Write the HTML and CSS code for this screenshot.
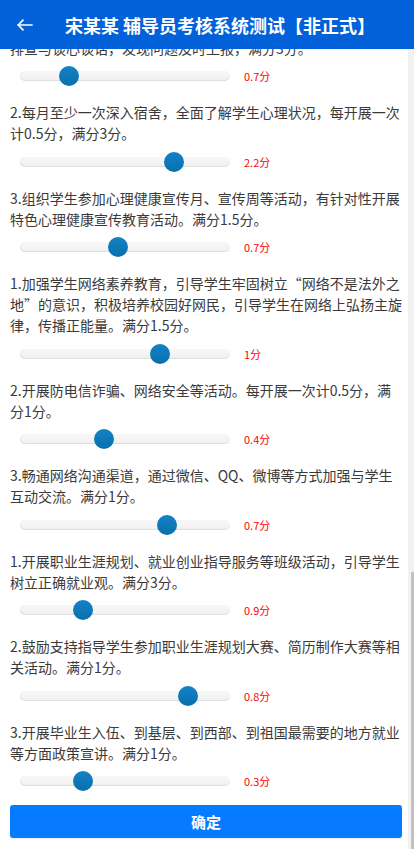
FILE: index.html
```html
<!DOCTYPE html>
<html lang="zh-CN">
<head>
<meta charset="utf-8">
<meta name="viewport" content="width=device-width, initial-scale=1">
<title>辅导员考核系统测试</title>
<link rel="stylesheet" href="styles.css">
</head>
<body>
<div class="app">
  <header class="topbar">
    <span class="back" aria-label="返回">
      <svg width="16" height="12" viewBox="0 0 16 12" fill="none" stroke="#fff" stroke-width="1.7" stroke-linecap="round" stroke-linejoin="round"><path d="M1.2 6H15"/><path d="M6 1.2L1.2 6L6 10.8"/></svg>
    </span>
    <h1 class="title">宋某某 辅导员考核系统测试【非正式】</h1>
  </header>
  <div class="viewport">
    <main class="scroll">
      <div class="list">
        <div class="item"><p class="desc">1.建立健全学生心理健康档案，对心理问题学生进行重点关注，及时做好心理疏导和危机干预工作，定期深入学生宿舍开展心理排查与谈心谈话，发现问题及时上报，满分3分。</p><div class="slider-row"><div class="track"><span class="thumb" style="left:23.33%"></span></div><span class="val">0.7分</span></div></div>
        <div class="item"><p class="desc">2.每月至少一次深入宿舍，全面了解学生心理状况，每开展一次计0.5分，满分3分。</p><div class="slider-row"><div class="track"><span class="thumb" style="left:73.33%"></span></div><span class="val">2.2分</span></div></div>
        <div class="item"><p class="desc">3.组织学生参加心理健康宣传月、宣传周等活动，有针对性开展特色心理健康宣传教育活动。满分1.5分。</p><div class="slider-row"><div class="track"><span class="thumb" style="left:46.67%"></span></div><span class="val">0.7分</span></div></div>
        <div class="item"><p class="desc">1.加强学生网络素养教育，引导学生牢固树立“网络不是法外之地”的意识，积极培养校园好网民，引导学生在网络上弘扬主旋律，传播正能量。满分1.5分。</p><div class="slider-row"><div class="track"><span class="thumb" style="left:66.67%"></span></div><span class="val">1分</span></div></div>
        <div class="item"><p class="desc">2.开展防电信诈骗、网络安全等活动。每开展一次计0.5分，满分1分。</p><div class="slider-row"><div class="track"><span class="thumb" style="left:40%"></span></div><span class="val">0.4分</span></div></div>
        <div class="item"><p class="desc">3.畅通网络沟通渠道，通过微信、QQ、微博等方式加强与学生互动交流。满分1分。</p><div class="slider-row"><div class="track"><span class="thumb" style="left:70%"></span></div><span class="val">0.7分</span></div></div>
        <div class="item"><p class="desc">1.开展职业生涯规划、就业创业指导服务等班级活动，引导学生树立正确就业观。满分3分。</p><div class="slider-row"><div class="track"><span class="thumb" style="left:30%"></span></div><span class="val">0.9分</span></div></div>
        <div class="item"><p class="desc">2.鼓励支持指导学生参加职业生涯规划大赛、简历制作大赛等相关活动。满分1分。</p><div class="slider-row"><div class="track"><span class="thumb" style="left:80%"></span></div><span class="val">0.8分</span></div></div>
        <div class="item"><p class="desc">3.开展毕业生入伍、到基层、到西部、到祖国最需要的地方就业等方面政策宣讲。满分1分。</p><div class="slider-row"><div class="track"><span class="thumb" style="left:30%"></span></div><span class="val">0.3分</span></div></div>
        <button class="submit" type="button">确定</button>
      </div>
    </main>
    <div class="rail" aria-hidden="true"><span class="rail-thumb"></span></div>
  </div>
</div>
</body>
</html>
```

FILE: styles.css
```css
* { box-sizing: border-box; }
html, body { margin: 0; padding: 0; height: 100%; }
body {
  font-family: "Noto Sans CJK SC", "Microsoft YaHei", "Noto Sans", sans-serif;
  color: #3a3a3a;
  background: #fff;
}
.app {
  height: 100vh;
  display: flex;
  flex-direction: column;
}
.topbar {
  flex: 0 0 49px;
  height: 49px;
  background: #0260d8;
  display: flex;
  align-items: center;
  padding-left: 17px;
}
.back {
  display: flex;
  width: 16px;
  height: 12px;
}
.title {
  margin: 0 0 0 32px;
  font-size: 18px;
  font-weight: bold;
  color: #fff;
  line-height: 24px;
  white-space: nowrap;
}
.viewport {
  flex: 1;
  min-height: 0;
  position: relative;
}
.scroll {
  height: 100%;
  overflow-y: auto;
  display: flex;
  flex-direction: column-reverse;
}
.scroll::-webkit-scrollbar { width: 6px; }
.scroll::-webkit-scrollbar-track { background: #f1f1f1; }
.scroll::-webkit-scrollbar-thumb { background: #c1c1c1; }
.rail {
  position: absolute;
  top: 0;
  right: 0;
  bottom: 0;
  width: 6px;
  background: #f1f1f1;
}
.rail-thumb {
  position: absolute;
  right: 0;
  bottom: 0;
  width: 3px;
  height: 277px;
  background: #c1c1c1;
}
.list {
  width: 408px;
  flex-shrink: 0;
  padding: 0 6px 11px 10px;
}
.item { padding-top: 16px; }
.desc {
  margin: 0 0 7.5px;
  font-size: 14px;
  line-height: 21px;
}
.slider-row {
  display: flex;
  align-items: center;
  height: 20px;
  padding-left: 10px;
}
.track {
  position: relative;
  width: 210px;
  height: 10px;
  border-radius: 5px;
  background: linear-gradient(#f7f7f7, #f1f1f1);
  box-shadow: inset 0 -1px 1px rgba(0,0,0,0.08), inset 1px 0 1px rgba(0,0,0,0.04);
}
.thumb {
  position: absolute;
  top: -5px;
  width: 20px;
  height: 20px;
  margin-left: -10px;
  border-radius: 50%;
  background: linear-gradient(#1382c6, #0870ac);
}
.val {
  margin-left: 14px;
  font-size: 11px;
  color: #f00;
}
.submit {
  display: block;
  width: 392px;
  height: 33px;
  margin-top: 14px;
  border: 0;
  border-radius: 3px;
  background: #077bff;
  color: #fff;
  font-family: inherit;
  font-size: 15px;
  font-weight: bold;
  box-shadow: 0 1px 2px rgba(0,0,0,0.08);
}
```
